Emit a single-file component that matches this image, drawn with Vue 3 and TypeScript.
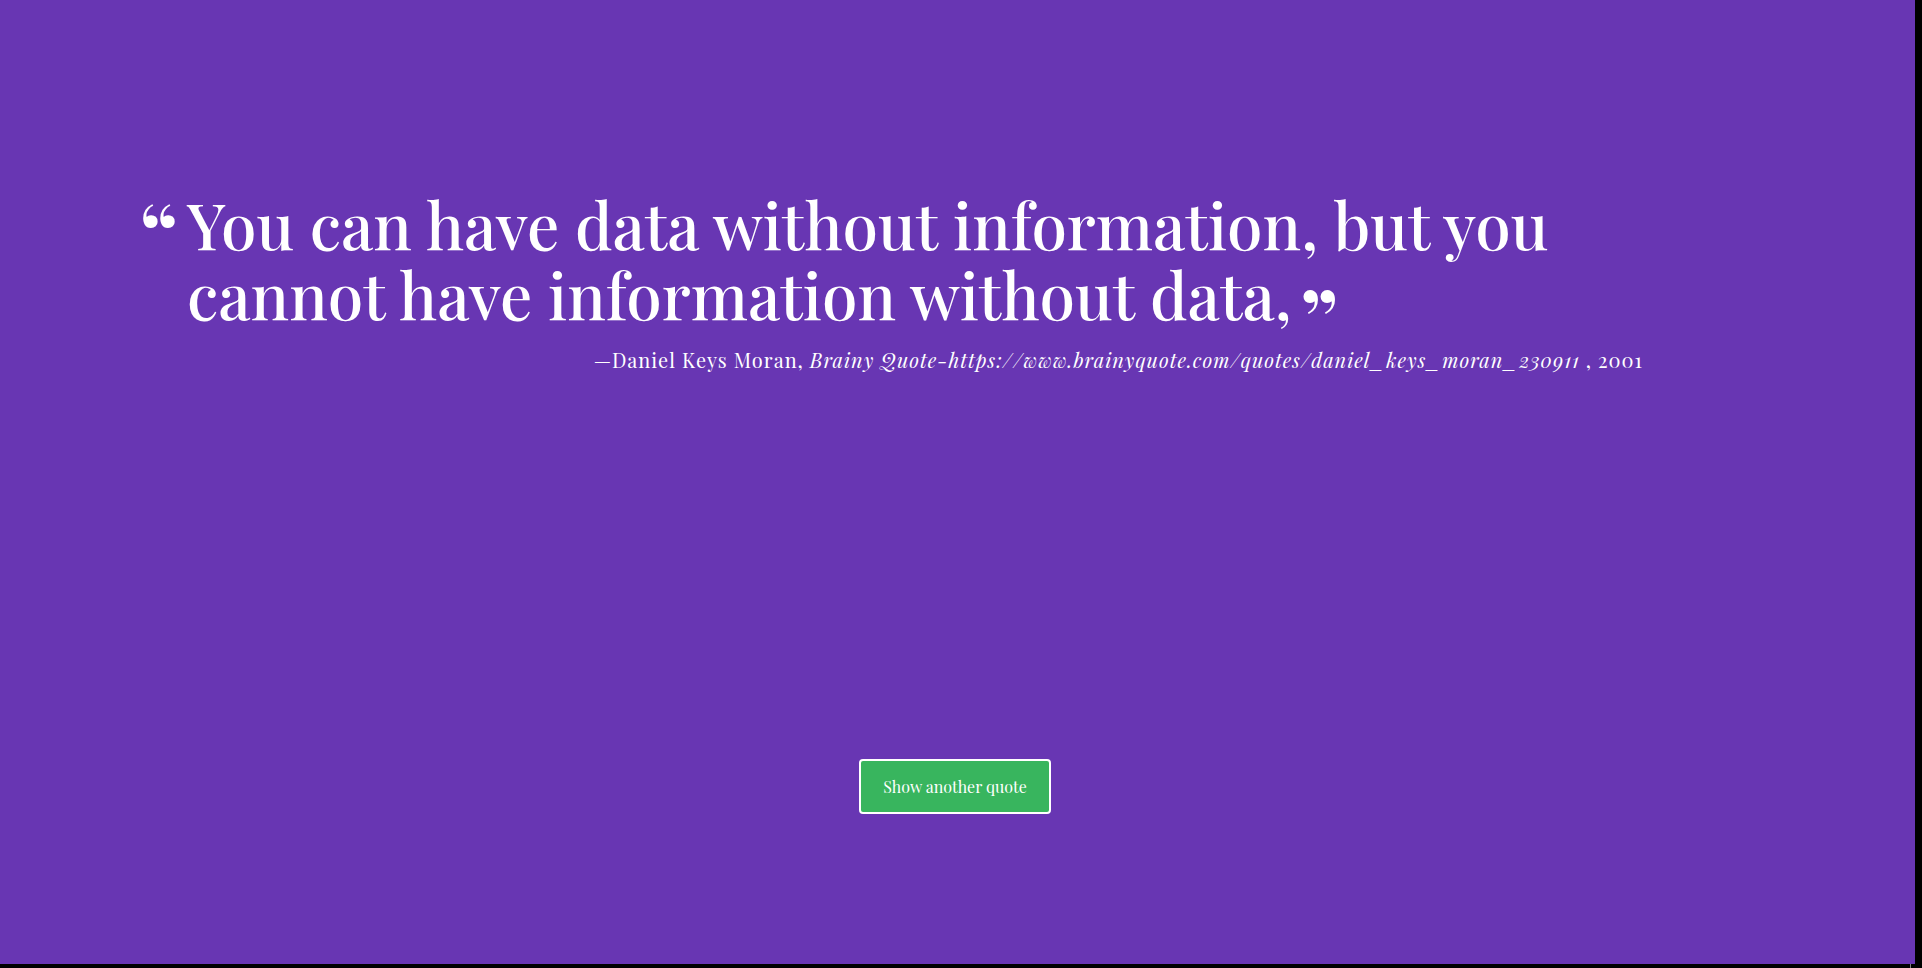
<script setup lang="ts">
import { ref, computed } from 'vue'

interface Quote {
  text: string
  source: string
  citation: string
  year: number
}

const quotes: Quote[] = [
  {
    text: 'You can have data without information, but you cannot have information without data,',
    source: 'Daniel Keys Moran',
    citation: 'Brainy Quote-https://www.brainyquote.com/quotes/daniel_keys_moran_230911',
    year: 2001,
  },
]

const index = ref(0)
const quote = computed(() => quotes[index.value])

function showAnother(): void {
  index.value = (index.value + 1) % quotes.length
}
</script>

<template>
  <main class="page">
    <figure class="quote-box">
      <span class="mark open">“</span>
      <blockquote class="quote">{{ quote.text }}<span class="mark close">”</span></blockquote>
      <figcaption class="source">
        —{{ quote.source }}, <cite class="citation">{{ quote.citation }}</cite> , {{ quote.year }}
      </figcaption>
    </figure>
    <button class="load-quote" type="button" @click="showAnother">Show another quote</button>
  </main>
  <div class="edge"></div>
</template>

<style>
body {
  margin: 0;
  background: #000;
}
</style>

<style scoped>
.page {
  box-sizing: border-box;
  display: flex;
  flex-direction: column;
  min-height: calc(100vh - 4px);
  margin-right: 7px;
  padding: 189px 5px 150px 0;
  background: #6836b3;
  color: #fff;
  font-family: 'Playfair Display', 'Liberation Serif', serif;
}

.edge {
  height: 4px;
  margin-right: 11px;
  border-right: 1px solid #808080;
}

.quote-box {
  display: grid;
  grid-template-columns: 48px minmax(0, 1fr) 48px;
  width: 86%;
  max-width: 1632px;
  margin: 0 auto;
}

.quote {
  margin: 0;
  font-size: 64px;
  font-weight: 500;
  line-height: 70px;
}

.mark {
  font-size: 88px;
  font-weight: 600;
  line-height: 70px;
}

.open {
  height: 62px;
  padding-top: 8px;
}

.close {
  display: inline-block;
  height: 46px;
  margin-left: 8px;
  padding-top: 24px;
  vertical-align: top;
}

.source {
  grid-column: 2;
  padding: 17px 80px 0 0;
  font-size: 20px;
  line-height: 28px;
  letter-spacing: 1px;
  text-align: right;
}

.citation {
  font-style: italic;
}

.load-quote {
  align-self: center;
  width: 192px;
  height: 55px;
  margin-top: auto;
  padding: 0;
  border: 2px solid #fff;
  border-radius: 4px;
  background: #38b55e;
  color: #fff;
  font-family: inherit;
  font-size: 16px;
  cursor: pointer;
}

.load-quote:hover {
  background: #2f9b50;
}
</style>
